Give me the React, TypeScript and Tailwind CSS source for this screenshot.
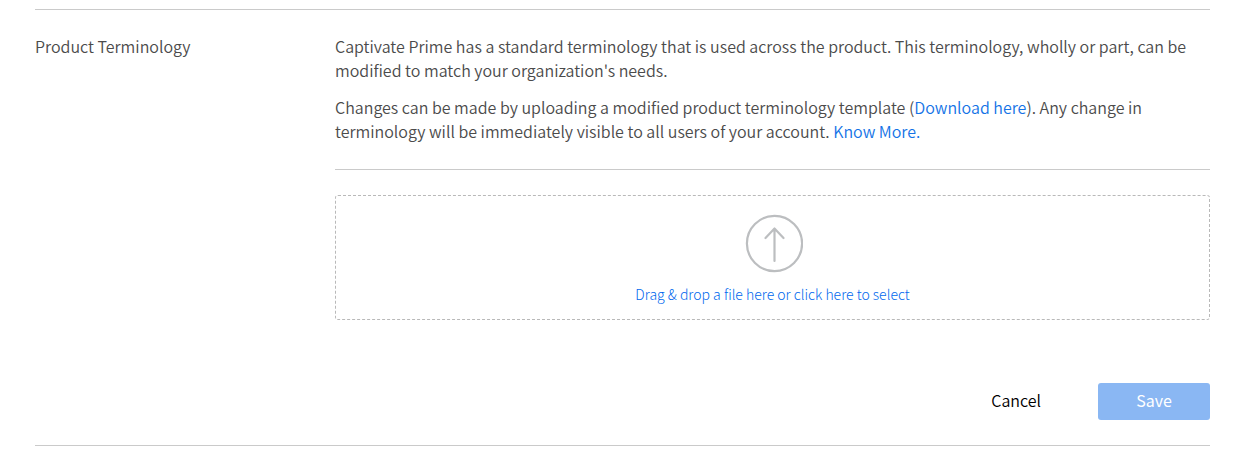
export default function App() {
  return (
    <main className="bg-white pr-[31px] pl-[35px] pt-[9px] font-['Noto_Sans_CJK_SC','Noto_Sans',sans-serif] text-base leading-6 font-[350] text-[#4b4b4b]">
      <section className="flex gap-6 border-y border-[#cacaca] pt-6 pb-[25px]">
        <h2 className="w-[276px] shrink-0 font-[350]">Product Terminology</h2>
        <div className="min-w-0 flex-1">
          <div className="flex flex-col gap-[13px] border-b border-[#cacaca] pb-[26px]">
            <p>
              Captivate Prime has a standard terminology that is used across the product. This terminology, wholly or
              part, can be modified to match your organization's needs.
            </p>
            <p>
              Changes can be made by uploading a modified product terminology template (
              <a href="#download" className="text-[#1473e6]">
                Download here
              </a>
              ). Any change in terminology will be immediately visible to all users of your account.{' '}
              <a href="#more" className="text-[#1473e6]">
                Know More.
              </a>
            </p>
          </div>

          <label className="mt-[25px] flex h-[125px] cursor-pointer flex-col items-center rounded-[3px] border border-dashed border-[#b9b9b9] pt-[17px] text-sm leading-5 font-light text-[#0068ee]">
            <input type="file" className="sr-only" />
            <svg viewBox="0 0 60 60" className="size-[60px]" fill="none" stroke="#bcbec0" strokeWidth="2.2" aria-hidden="true">
              <circle cx="31.5" cy="30.5" r="27.6" />
              <path d="M31.5 48V15.5M22.5 25l9-9.5 9 9.5" strokeLinecap="round" strokeLinejoin="round" />
            </svg>
            <span className="mt-[11px]">Drag &amp; drop a file here or click here to select</span>
          </label>

          <div className="mt-[63px] flex justify-end gap-4">
            <button type="button" className="h-[37px] px-[41px] pb-[3px] text-black">
              Cancel
            </button>
            <button type="button" className="h-[37px] w-28 rounded-[3px] bg-[#8ab7f3] pb-[3px] font-normal text-white">
              Save
            </button>
          </div>
        </div>
      </section>
    </main>
  );
}
